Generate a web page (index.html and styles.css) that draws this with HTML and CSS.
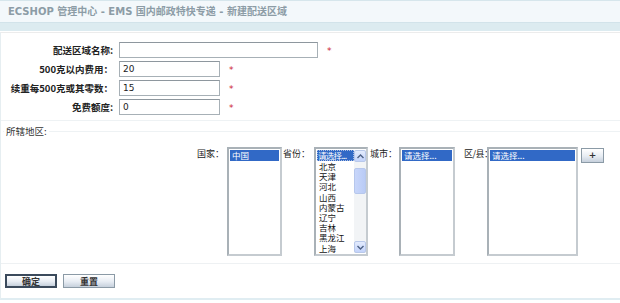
FILE: index.html
```html
<!DOCTYPE html>
<html lang="zh-CN">
<head>
  <meta charset="UTF-8">
  <title>新建配送区域</title>
  <link rel="stylesheet" href="styles.css">
</head>
<body>

  <div class="header">
    <span class="brand">ECSHOP 管理中心</span><span class="crumb"> - EMS 国内邮政特快专递 </span><span class="crumb"> - 新建配送区域</span>
  </div>
  <div class="band"></div>

  <div class="main">
    <div class="form">
      <label class="lbl">配送区域名称:</label>
      <div class="field"><input class="txt wide" type="text" value=""><span class="req">*</span></div>

      <label class="lbl">500克以内费用：</label>
      <div class="field"><input class="txt" type="text" value="20"><span class="req">*</span></div>

      <label class="lbl">续重每500克或其零数：</label>
      <div class="field"><input class="txt" type="text" value="15"><span class="req">*</span></div>

      <label class="lbl">免费额度:</label>
      <div class="field"><input class="txt" type="text" value="0"><span class="req">*</span></div>
    </div>

    <fieldset class="region">
      <legend>所辖地区:</legend>
      <div class="pickers">
        <span class="plabel l-country">国家：</span>
        <div class="listbox country">
          <div class="opt sel">中国</div>
        </div>

        <span class="plabel l-province">省份：</span>
        <div class="listbox province">
          <div class="opts">
            <div class="opt sel focus">请选择...</div>
            <div class="opt">北京</div>
            <div class="opt">天津</div>
            <div class="opt">河北</div>
            <div class="opt">山西</div>
            <div class="opt">内蒙古</div>
            <div class="opt">辽宁</div>
            <div class="opt">吉林</div>
            <div class="opt">黑龙江</div>
            <div class="opt">上海</div>
          </div>
          <div class="scrollbar">
            <div class="sb-btn">
              <svg width="7" height="5" viewBox="0 0 7 5"><path d="M0.5 4 L3.5 1 L6.5 4" fill="none" stroke="#4d6185" stroke-width="1.4"/></svg>
            </div>
            <div class="sb-track"><div class="sb-thumb"></div></div>
            <div class="sb-btn">
              <svg width="7" height="5" viewBox="0 0 7 5"><path d="M0.5 1 L3.5 4 L6.5 1" fill="none" stroke="#4d6185" stroke-width="1.4"/></svg>
            </div>
          </div>
        </div>

        <span class="plabel l-city">城市：</span>
        <div class="listbox city">
          <div class="opt sel">请选择...</div>
        </div>

        <span class="plabel l-district">区/县：</span>
        <div class="listbox district">
          <div class="opt sel">请选择...</div>
        </div>

        <button class="btn plus" type="button">+</button>
      </div>
    </fieldset>

    <div class="actions">
      <button class="btn submit" type="button">确定</button>
      <button class="btn" type="button">重置</button>
    </div>
  </div>

</body>
</html>
```

FILE: styles.css
```css
body {
  margin: 0;
  background: #fff;
  font-family: "DejaVu Sans", "Noto Sans CJK SC", sans-serif;
  font-size: 10px;
  color: #222;
  width: 620px;
  height: 303px;
  overflow: hidden;
}
.header {
  height: 21px;
  line-height: 22px;
  padding-left: 8px;
  background: #f3f8fb;
  border-top: 1px solid #d6e6ec;
  color: #8c9ca6;
  font-size: 10px;
  font-weight: bold;
  white-space: nowrap;
}
.band {
  height: 8px;
  background: #dcebf0;
  border-top: 1px solid #d2e3ea;
  border-bottom: 1px solid #fff;
}
.main {
  border-top: 1px solid #ececec;
  border-left: 1px solid #e6eef1;
  border-bottom: 2px solid #e0edf2;
  height: 268px;
  box-sizing: border-box;
}
.form {
  display: grid;
  grid-template-columns: 112px 1fr;
  column-gap: 6px;
  row-gap: 3px;
  padding-top: 9px;
  padding-bottom: 5px;
  border-bottom: 1px solid #eef2f4;
  align-items: center;
}
.lbl {
  text-align: right;
  font-weight: bold;
  font-size: 9.5px;
  color: #222;
  font-family: "Noto Sans CJK SC", sans-serif;
}
.field {
  display: flex;
  align-items: center;
  height: 16px;
}
.txt {
  box-sizing: border-box;
  width: 101px;
  height: 16px;
  margin: 0;
  padding: 0 3px;
  border: 1px solid #a7b0b6;
  border-top-color: #8e979e;
  font-family: "DejaVu Sans", sans-serif;
  font-size: 9px;
  color: #222;
}
.txt.wide {
  width: 199px;
}
.req {
  color: #cc2233;
  margin-left: 9px;
  font-size: 9px;
  line-height: 10px;
  padding-top: 2px;
}
.region {
  margin: 3px 0 0 2px;
  padding: 0;
  border: 0;
  border-top: 1px solid #eef2f4;
  height: 138px;
}
.region legend {
  padding: 0 2px;
  margin-left: 1px;
  font-size: 9.5px;
  color: #333;
  font-family: "Noto Sans CJK SC", sans-serif;
}
.pickers {
  display: flex;
  align-items: flex-start;
  padding: 9px 0 0 194px;
  font-family: "Noto Sans CJK SC", sans-serif;
  font-size: 9px;
}
.plabel {
  line-height: 12px;
  padding-top: 1px;
  white-space: nowrap;
  color: #222;
}
.l-country { width: 30px; }
.l-province { width: 31px; margin-left: 1px; }
.l-city { width: 29px; margin-left: 2px; }
.l-district { width: 23px; margin-left: 9px; letter-spacing: -0.5px; }
.listbox {
  box-sizing: border-box;
  height: 109px;
  border: 2px solid #c5cbd0;
  border-top-color: #a9b1b7;
  border-left-color: #a9b1b7;
  background: #fff;
  padding: 1px;
  display: flex;
}
.country { width: 55px; }
.province { width: 54px; padding-right: 0; }
.city { width: 56px; }
.district { width: 91px; }
.listbox > .opt {
  flex: 1;
  align-self: flex-start;
}
.opts {
  flex: 1;
  overflow: hidden;
}
.opt {
  height: 10.2px;
  line-height: 10.2px;
  padding-left: 2px;
  font-size: 8.5px;
  white-space: nowrap;
  color: #111;
}
.opt.sel {
  background: #3169c6;
  color: #fff;
  height: 11px;
  line-height: 11px;
}
.province .opt.sel {
  padding-left: 1px;
  letter-spacing: -0.7px;
  overflow: hidden;
}
.opt.focus {
  outline: 1px dotted #aabde3;
  outline-offset: -1px;
}
.scrollbar {
  width: 12px;
  display: flex;
  flex-direction: column;
  background: #f2f4f6;
}
.sb-btn {
  height: 12px;
  box-sizing: border-box;
  border: 1px solid #b8c8ea;
  border-radius: 2px;
  background: linear-gradient(#e3ebfd, #c3d3fb);
  display: flex;
  align-items: center;
  justify-content: center;
}
.sb-track {
  flex: 1;
  padding: 1px 0;
}
.sb-thumb {
  height: 24px;
  margin-top: 5px;
  border: 1px solid #b6c7ec;
  border-radius: 2px;
  background: linear-gradient(90deg, #c8d6fa, #b9cbf6);
}
.btn {
  box-sizing: border-box;
  margin: 0;
  padding: 0;
  border: 1px solid #8b9aa6;
  background: linear-gradient(#ffffff, #e7ecf3 55%, #c6d0dc);
  font-family: "Noto Sans CJK SC", sans-serif;
  font-size: 9px;
  font-weight: bold;
  color: #333;
  line-height: 11px;
}
.plus {
  width: 23px;
  height: 15px;
  margin-top: 1px;
  margin-left: 3px;
  font-family: "DejaVu Sans", sans-serif;
  font-weight: bold;
  font-size: 9px;
}
.actions {
  display: flex;
  gap: 6px;
  padding: 10px 0 0 4px;
  border-top: 1px solid #eef1f3;
}
.actions .btn {
  width: 52px;
  height: 14px;
}
.actions .submit {
  border: 2px solid #3b4a5c;
}
```
